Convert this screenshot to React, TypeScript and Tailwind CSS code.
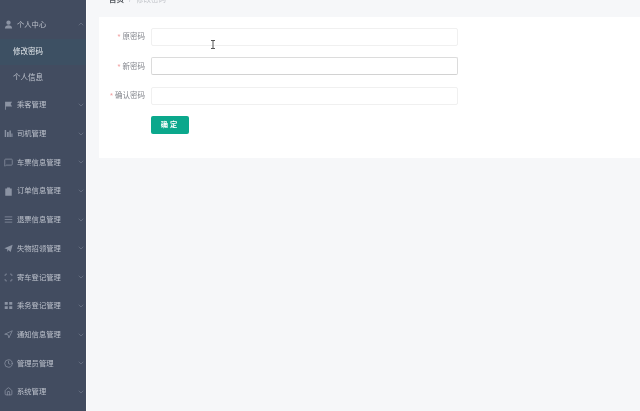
import React from "react";
import { MessageSquare, AlignJustify, Scan, Navigation, Clock, Home, ChevronDown, ChevronUp } from "lucide-react";

type IconProps = { className?: string };

const UserFill = ({ className }: IconProps) => (
  <svg className={className} viewBox="0 0 10 10" fill="currentColor">
    <circle cx="5" cy="3" r="2.4" />
    <path d="M1 9.5c0-2.6 1.8-3.6 4-3.6s4 1 4 3.6z" />
  </svg>
);
const FlagFill = ({ className }: IconProps) => (
  <svg className={className} viewBox="0 0 10 10" fill="currentColor">
    <path d="M1.2 .8h7.8l-1.6 2.6 1.6 2.6H2.1v3.6h-.9z" />
  </svg>
);
const BarsFill = ({ className }: IconProps) => (
  <svg className={className} viewBox="0 0 10 10" fill="currentColor">
    <path d="M.8 1h1.6v8H.8zM3.4 3.4h1.8V9H3.4zM6 1.8h1.6V9H6zM8.2 5h1.2v4H8.2z" />
  </svg>
);
const ClipFill = ({ className }: IconProps) => (
  <svg className={className} viewBox="0 0 10 10" fill="currentColor">
    <path d="M3.4.6h3.2v1.2h2V9.6H1.4V1.8h2z" />
  </svg>
);
const PlaneFill = ({ className }: IconProps) => (
  <svg className={className} viewBox="0 0 10 10" fill="currentColor">
    <path d="M9.6.8 7.4 9 4.9 6.6 3.6 9V5.8L.4 4.7z" />
  </svg>
);
const GridFill = ({ className }: IconProps) => (
  <svg className={className} viewBox="0 0 10 10" fill="currentColor">
    <path d="M.8 1h3.4v3.2H.8zM5.8 1h3.4v3.2H5.8zM.8 5.8h3.4V9H.8zM5.8 5.8h3.4V9H5.8z" />
  </svg>
);

const items = [
  { label: "乘客管理", Icon: FlagFill },
  { label: "司机管理", Icon: BarsFill },
  { label: "车票信息管理", Icon: MessageSquare },
  { label: "订单信息管理", Icon: ClipFill },
  { label: "退票信息管理", Icon: AlignJustify },
  { label: "失物招领管理", Icon: PlaneFill },
  { label: "寄车登记管理", Icon: Scan },
  { label: "乘务登记管理", Icon: GridFill },
  { label: "通知信息管理", Icon: Navigation },
  { label: "管理员管理", Icon: Clock },
  { label: "系统管理", Icon: Home },
];

function Row({ label, Icon, open }: { label: string; Icon: React.ElementType; open?: boolean }) {
  return (
    <div className="h-[28.7px] flex items-center pl-[4px] pr-[1px]">
      <Icon className="w-[9px] h-[9px] text-[#8b93a3] shrink-0" />
      <span className="ml-[4px] text-[7.3px] leading-none text-[#bcc1cb] whitespace-nowrap">{label}</span>
      {open ? (
        <ChevronUp className="ml-auto w-[8px] h-[8px] text-[#717a8b]" />
      ) : (
        <ChevronDown className="ml-auto w-[8px] h-[8px] text-[#717a8b]" />
      )}
    </div>
  );
}

function Field({ label, active }: { label: string; active?: boolean }) {
  return (
    <div className="flex items-center h-[18px] mb-[11.4px]">
      <div className="w-[46px] mr-[6px] text-right text-[7.5px] leading-none text-[#83868d] whitespace-nowrap">
        <span className="text-[#f09a9a] mr-[2px]">*</span>
        {label}
      </div>
      <div className={`w-[307px] h-[18px] rounded-[2px] bg-white border ${active ? "border-[#dcdcdc] border-b-[#d2d2d2]" : "border-[#f0f0f0]"}`} />
    </div>
  );
}

export default function App() {
  return (
    <div className="relative w-[640px] h-[411px] overflow-hidden flex bg-[#f6f7f9] font-['Liberation_Sans','Noto_Sans_CJK_SC',sans-serif] blur-[0.35px]">
      <aside className="w-[86px] h-[411px] shrink-0 bg-[#424c60] pt-[10px] overflow-hidden">
        <Row label="个人中心" Icon={UserFill} open />
        <div className="h-[26px] bg-[#3d5063] flex items-center pl-[13px] text-[7.5px] leading-none text-[#e4e8ec]">修改密码</div>
        <div className="h-[26px] flex items-center pl-[13px] text-[7.5px] leading-none text-[#c3c8d1]">个人信息</div>
        {items.map((it) => (
          <Row key={it.label} label={it.label} Icon={it.Icon} />
        ))}
      </aside>
      <main className="flex-1 min-w-0 pl-[12px] border-l border-[#fcfcfc]">
        <div className="-mt-[6px] h-[23px] flex items-start pt-[2px] pl-[10px] text-[7.5px] leading-[8px]">
          <span className="font-bold text-[#55595f]">首页</span>
          <span className="mx-[5px] text-[#c0c4cc]">/</span>
          <span className="text-[#c2c5ca]">修改密码</span>
        </div>
        <section className="bg-white h-[141px] pt-[11px]">
          <Field label="原密码" />
          <Field label="新密码" active />
          <Field label="确认密码" />
          <div className="ml-[52px]">
            <div className="w-[38px] h-[18px] rounded-[2px] bg-[#0ba88c] flex items-center justify-center text-[7.3px] tracking-[2px] text-white font-bold mt-[3px]">确定</div>
          </div>
        </section>
      </main>
      <svg className="absolute left-[210px] top-[40px]" width="6" height="9" viewBox="0 0 6 9" fill="none" stroke="#555" strokeWidth="1">
        <path d="M1 .5h4M1 8.5h4M3 .5v8" />
      </svg>
    </div>
  );
}
